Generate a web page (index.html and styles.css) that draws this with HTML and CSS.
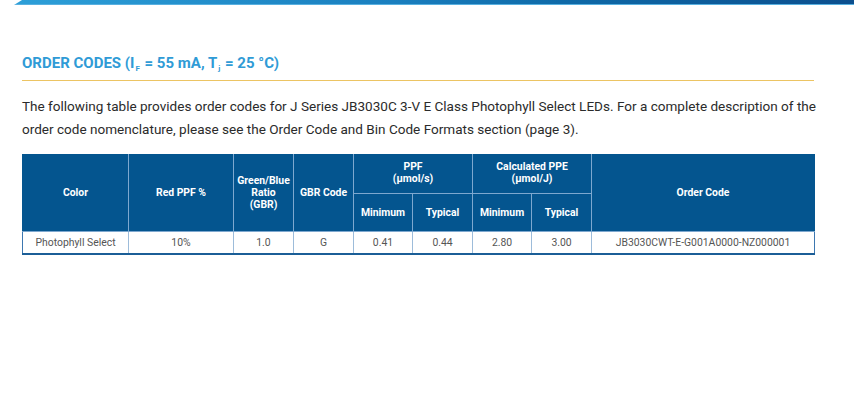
FILE: index.html
```html
<!DOCTYPE html>
<html>
<head>
<meta charset="utf-8">
<link rel="stylesheet" href="styles.css">
</head>
<body>
<div class="topbar"></div>
<main class="page">
  <h2 class="title">ORDER CODES (I<sub>F</sub> = 55 mA, T<sub>j</sub> = 25 °C)</h2>
  <p class="intro">The following table provides order codes for J Series JB3030C 3-V E Class Photophyll Select LEDs. For a complete description of the order code nomenclature, please see the Order Code and Bin Code Formats section (page 3).</p>
  <table class="codes">
    <colgroup>
      <col class="c1"><col class="c2"><col class="c3"><col class="c4"><col class="c5"><col class="c6"><col class="c7"><col class="c8"><col class="c9">
    </colgroup>
    <thead>
      <tr class="h1">
        <th rowspan="2">Color</th>
        <th rowspan="2">Red PPF %</th>
        <th rowspan="2">Green/Blue<br>Ratio<br>(GBR)</th>
        <th rowspan="2">GBR Code</th>
        <th colspan="2" class="grp">PPF<br>(µmol/s)</th>
        <th colspan="2" class="grp">Calculated PPE<br>(µmol/J)</th>
        <th rowspan="2">Order Code</th>
      </tr>
      <tr class="h2">
        <th>Minimum</th><th>Typical</th><th>Minimum</th><th>Typical</th>
      </tr>
    </thead>
    <tbody>
      <tr>
        <td>Photophyll Select</td><td>10%</td><td>1.0</td><td>G</td><td>0.41</td><td>0.44</td><td>2.80</td><td>3.00</td><td>JB3030CWT-E-G001A0000-NZ000001</td>
      </tr>
    </tbody>
  </table>
</main>
</body>
</html>
```
FILE: styles.css
```css
html, body {
  margin: 0;
  padding: 0;
  background: #ffffff;
}
body {
  font-family: Roboto, "Liberation Sans", sans-serif;
}
.topbar {
  height: 4px;
  margin-left: 14px;
  background: linear-gradient(90deg, #2d9fd8 0%, #1a7fbf 45%, #0f6aa8 65%, #0c4f8e 100%);
  border-bottom: 1px solid #58b0e0;
  clip-path: polygon(8px 0, 100% 0, 100% 100%, 0 100%);
}
.page {
  padding: 0 40px 0 22px;
}
.title {
  margin: 48px 0 0;
  padding-bottom: 7px;
  border-bottom: 1px solid #ecc463;
  font-size: 15px;
  font-weight: 700;
  line-height: 20px;
  color: #2f9bd6;
}
.title sub {
  font-size: 8px;
  vertical-align: -3px;
  line-height: 0;
  margin: 0 1px;
}
.intro {
  margin: 14px -6px 0 0;
  font-size: 13.55px;
  line-height: 23px;
  color: #2b2b2b;
}
.codes {
  margin-top: 13px;
  width: 792px;
  border-collapse: collapse;
  table-layout: fixed;
  font-size: 10.4px;
}
.c1 { width: 106px; }
.c2 { width: 105px; }
.c3 { width: 60px; }
.c4 { width: 60px; }
.c5 { width: 59px; }
.c6 { width: 60px; }
.c7 { width: 59px; }
.c8 { width: 60px; }
.c9 { width: 223px; }
.codes th {
  background: #04558f;
  color: #ffffff;
  font-weight: 700;
  line-height: 12px;
  padding: 0 1px;
  border: 1px solid #7ea8cf;
  text-align: center;
  vertical-align: middle;
}
.codes thead tr.h1 { height: 39px; }
.codes thead tr.h2 { height: 38px; }
.codes th.grp { vertical-align: top; padding-top: 6px; }
.codes thead tr.h1 th:first-child { border-left-color: #04558f; }
.codes thead tr.h1 th:last-child { border-right-color: #04558f; }
.codes thead tr.h1 th { border-top-color: #04558f; }
.codes td {
  height: 21px;
  padding: 0 2px;
  text-align: center;
  color: #555555;
  border: 1px solid #9dbcda;
  border-bottom: 2px solid #1b5e97;
  line-height: 12px;
}
.codes td:first-child { border-left: 1px solid #3d77b0; }
.codes td:last-child { border-right: 1px solid #3d77b0; }
```
